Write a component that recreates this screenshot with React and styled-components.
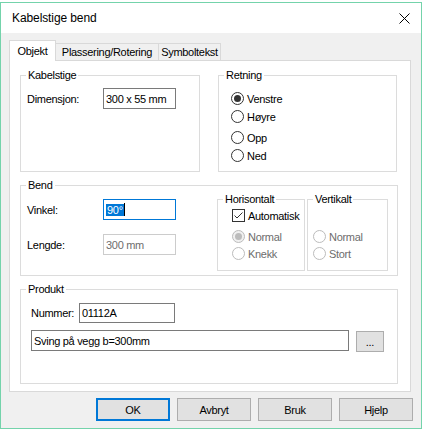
import React from "react";
import styled, { createGlobalStyle } from "styled-components";

const GlobalStyle = createGlobalStyle`
  body {
    margin: 0;
    background: #fff;
    font-family: "Liberation Sans", Arial, sans-serif;
    font-size: 11px;
    letter-spacing: -0.3px;
    color: #000;
  }
`;

const Window = styled.div`
  box-sizing: border-box;
  width: 422px;
  margin-top: 2px;
  border: 1px solid #74d3ab;
  background: #f0f0f0;
`;

const TitleBar = styled.div`
  height: 30px;
  background: #fff;
  display: flex;
  align-items: center;
  justify-content: space-between;
  padding: 0 11px;
  font-size: 12px;
  letter-spacing: -0.1px;
`;

const Body = styled.div`
  padding: 7px 8px 7px 8px;
`;

const TabStrip = styled.div`
  display: flex;
  align-items: flex-end;
  height: 21px;
`;

const Tab = styled.div`
  box-sizing: border-box;
  position: relative;
  z-index: ${p => (p.$active ? 2 : 0)};
  width: ${p => p.$w}px;
  height: ${p => (p.$active ? 21 : 18)}px;
  margin-right: -1px;
  border: 1px solid #d9d9d9;
  border-bottom: none;
  background: ${p => (p.$active ? "#fff" : "#f0f0f0")};
  display: flex;
  align-items: center;
  justify-content: center;
  padding-bottom: ${p => (p.$active ? 0 : 1)}px;
`;

const TabPanel = styled.div`
  position: relative;
  z-index: 1;
  box-sizing: border-box;
  width: 402px;
  height: 332px;
  margin-top: -1px;
  background: #fff;
  border: 1px solid #d9d9d9;
  padding: 7px 12px 7px 10px;
  display: flex;
  flex-direction: column;
  gap: 6px;
`;

const TopRow = styled.div`
  display: flex;
  gap: 18px;
`;

const Group = styled.fieldset`
  box-sizing: border-box;
  margin: 0;
  padding: 0;
  min-width: 0;
  width: ${p => p.$w}px;
  height: ${p => p.$h}px;
  border: 1px solid #dcdcdc;
`;

const Legend = styled.legend`
  margin-left: 5px;
  padding: 0 2px;
  line-height: 14px;
`;

const GroupBody = styled.div`
  padding: ${p => p.$pad};
`;

const BendBody = styled.div`
  display: flex;
  justify-content: space-between;
  padding: 0 9px 0 6px;
`;

const FieldColumn = styled.div`
  margin-top: 7px;
  display: flex;
  flex-direction: column;
  gap: 14px;
`;

const SubGroups = styled.div`
  display: flex;
  gap: 2px;
`;

const FieldRow = styled.div`
  display: flex;
  align-items: center;
  margin-top: ${p => p.$mt || 0}px;
`;

const ProductRow = styled.div`
  display: flex;
  align-items: flex-start;
  gap: 7px;
  margin-top: 7px;
`;

const Label = styled.span`
  width: ${p => p.$w}px;
  flex: none;
`;

const TextBox = styled.div`
  box-sizing: border-box;
  width: ${p => p.$w}px;
  height: ${p => p.$h || 21}px;
  border: 1px solid
    ${p => (p.$focus ? "#0078d7" : p.$disabled ? "#cccccc" : "#7a7a7a")};
  background: #fff;
  color: ${p => (p.$disabled ? "#6d6d6d" : "#000")};
  padding-left: 2px;
  display: flex;
  align-items: center;
  white-space: nowrap;
`;

const Selection = styled.span`
  background: #0078d7;
  color: #fff;
  line-height: 12px;
  padding: 0 1px;
`;

const Caret = styled.span`
  width: 1px;
  height: 13px;
  background: #000;
`;

const OptionRow = styled.div`
  display: flex;
  align-items: center;
  gap: 3px;
  height: 17px;
  margin-top: ${p => p.$mt || 0}px;
  color: ${p => (p.$disabled ? "#6d6d6d" : "#000")};
`;

const RadioDot = styled.span`
  box-sizing: border-box;
  width: 13px;
  height: 13px;
  flex: none;
  border-radius: 50%;
  border: 1px solid ${p => (p.$disabled ? "#bcbcbc" : "#333")};
  background: ${p => (p.$disabled && p.$checked ? "#f0f0f0" : "#fff")};
  display: grid;
  place-items: center;
  &::after {
    content: "";
    display: ${p => (p.$checked ? "block" : "none")};
    width: 7px;
    height: 7px;
    border-radius: 50%;
    background: ${p => (p.$disabled ? "#bcbcbc" : "#333")};
  }
`;

const CheckBox = styled.span`
  box-sizing: border-box;
  width: 13px;
  height: 13px;
  flex: none;
  border: 1px solid #333;
  background: #fff;
  display: grid;
  place-items: center;
`;

const BrowseButton = styled.div`
  box-sizing: border-box;
  width: 28px;
  height: 21px;
  margin-top: 1px;
  border: 1px solid #adadad;
  background: #e1e1e1;
  display: flex;
  align-items: center;
  justify-content: center;
`;

const ButtonRow = styled.div`
  display: flex;
  justify-content: flex-end;
  gap: 7px;
  margin-top: 6px;
`;

const DialogButton = styled.div`
  box-sizing: border-box;
  width: 74px;
  height: 23px;
  border: ${p => (p.$primary ? "2px solid #0078d7" : "1px solid #adadad")};
  background: #e1e1e1;
  display: flex;
  align-items: center;
  justify-content: center;
`;

const Radio = ({ label, checked, disabled, mt }) => (
  <OptionRow $disabled={disabled} $mt={mt}>
    <RadioDot $checked={checked} $disabled={disabled} />
    {label}
  </OptionRow>
);

const Check = ({ label, checked }) => (
  <OptionRow>
    <CheckBox>
      {checked && (
        <svg width="11" height="11" viewBox="0 0 11 11">
          <path d="M1.5 5.5 L4 8 L9.5 2.5" fill="none" stroke="#333" strokeWidth="1" />
        </svg>
      )}
    </CheckBox>
    {label}
  </OptionRow>
);

const CloseIcon = () => (
  <svg width="11" height="11" viewBox="0 0 11 11">
    <path d="M0.5 0.5 L10.5 10.5 M10.5 0.5 L0.5 10.5" stroke="#000" strokeWidth="1" />
  </svg>
);

const tabs = [
  { label: "Objekt", w: 47, active: true },
  { label: "Plassering/Rotering", w: 104 },
  { label: "Symboltekst", w: 63 },
];

export default function App() {
  return (
    <>
      <GlobalStyle />
      <Window>
        <TitleBar>
          <span>Kabelstige bend</span>
          <CloseIcon />
        </TitleBar>
        <Body>
          <TabStrip>
            {tabs.map(t => (
              <Tab key={t.label} $w={t.w} $active={t.active}>
                {t.label}
              </Tab>
            ))}
          </TabStrip>
          <TabPanel>
            <TopRow>
              <Group $w={180} $h={104}>
                <Legend>Kabelstige</Legend>
                <GroupBody $pad="6px 0 0 6px">
                  <FieldRow>
                    <Label $w={76}>Dimensjon:</Label>
                    <TextBox $w={73}>300 x 55 mm</TextBox>
                  </FieldRow>
                </GroupBody>
              </Group>
              <Group $w={179} $h={104}>
                <Legend>Retning</Legend>
                <GroupBody $pad="8px 0 0 12px">
                  <Radio label="Venstre" checked />
                  <Radio label="Høyre" mt={1} />
                  <Radio label="Opp" mt={4} />
                  <Radio label="Ned" mt={1} />
                </GroupBody>
              </Group>
            </TopRow>

            <Group $w={378} $h={98}>
              <Legend>Bend</Legend>
              <BendBody>
                <FieldColumn>
                  <FieldRow>
                    <Label $w={76}>Vinkel:</Label>
                    <TextBox $w={73} $focus>
                      <Selection>90°</Selection>
                      <Caret />
                    </TextBox>
                  </FieldRow>
                  <FieldRow>
                    <Label $w={76}>Lengde:</Label>
                    <TextBox $w={73} $disabled>
                      300 mm
                    </TextBox>
                  </FieldRow>
                </FieldColumn>
                <SubGroups>
                  <Group $w={88} $h={79}>
                    <Legend>Horisontalt</Legend>
                    <GroupBody $pad="1px 0 0 14px">
                      <Check label="Automatisk" checked />
                      <Radio label="Normal" checked disabled mt={4} />
                      <Radio label="Knekk" disabled />
                    </GroupBody>
                  </Group>
                  <Group $w={81} $h={79}>
                    <Legend>Vertikalt</Legend>
                    <GroupBody $pad="1px 0 0 5px">
                      <Radio label="Normal" disabled mt={21} />
                      <Radio label="Stort" disabled />
                    </GroupBody>
                  </Group>
                </SubGroups>
              </BendBody>
            </Group>

            <Group $w={378} $h={102}>
              <Legend>Produkt</Legend>
              <GroupBody $pad="7px 0 0 10px">
                <FieldRow>
                  <Label $w={48}>Nummer:</Label>
                  <TextBox $w={96} $h={20}>
                    01112A
                  </TextBox>
                </FieldRow>
                <ProductRow>
                  <TextBox $w={318}>Sving på vegg b=300mm</TextBox>
                  <BrowseButton>...</BrowseButton>
                </ProductRow>
              </GroupBody>
            </Group>
          </TabPanel>

          <ButtonRow>
            <DialogButton $primary>OK</DialogButton>
            <DialogButton>Avbryt</DialogButton>
            <DialogButton>Bruk</DialogButton>
            <DialogButton>Hjelp</DialogButton>
          </ButtonRow>
        </Body>
      </Window>
    </>
  );
}
